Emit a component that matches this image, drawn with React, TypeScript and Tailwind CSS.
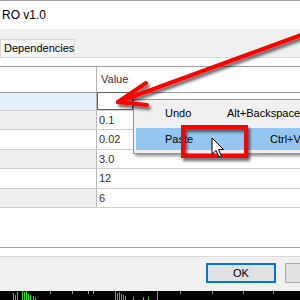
const ROWS = [
  { value: '', h: 'h-[18px]', left: 'bg-[#e3eefa]', edit: true },
  { value: '0.1', h: 'h-[19px]', left: 'bg-[#efefef]' },
  { value: '0.02', h: 'h-[20px]', left: 'bg-white' },
  { value: '3.0', h: 'h-[19px]', left: 'bg-[#efefef]' },
  { value: '12', h: 'h-[20px]', left: 'bg-white' },
  { value: '6', h: 'h-[19px]', left: 'bg-[#efefef]' },
]

// green volume bars along the bottom strip: [x, height]
const BARS: [number, number][] = [
  [13, 7], [15, 5], [17, 8], [22, 9], [24, 8], [26, 9], [28, 6], [30, 5], [33, 4], [35, 3],
  [115, 9], [117, 7], [119, 8], [121, 6], [123, 5], [125, 4], [133, 3], [143, 3], [148, 3], [157, 9],
]
const TICKS = [50, 72, 88, 93, 180, 212, 243, 273]

function Overlay() {
  return (
    <svg className="absolute left-0 top-0 pointer-events-none" width={300} height={300}>
      <defs>
        <filter id="sh" x="-20%" y="-20%" width="140%" height="160%">
          <feDropShadow dx="2" dy="3" stdDeviation="1.8" floodColor="#000" floodOpacity="0.6" />
        </filter>
      </defs>
      <g filter="url(#sh)" stroke="#ff0000" strokeWidth={4} strokeLinecap="round" fill="none">
        <line x1={304} y1={34} x2={118} y2={102} />
        <line x1={118} y1={102} x2={146} y2={83} />
        <line x1={118} y1={102} x2={147} y2={105} />
        <rect x={183} y={127} width={63} height={29} strokeLinecap="butt" />
      </g>
      <path
        d="M212 138 L212 154 L216 150.5 L219 157 L221.5 156 L218.5 149.5 L223.5 149.5 Z"
        fill="#fff"
        stroke="#000"
        strokeWidth={1}
        strokeLinejoin="round"
      />
    </svg>
  )
}

export default function App() {
  return (
    <div className="relative w-[300px] h-[300px] overflow-hidden flex flex-col bg-[#f0f0f0] text-[#222] font-['Liberation_Sans',Arial,sans-serif]">
      {/* title bar */}
      <div className="h-[29px] shrink-0 bg-white border-t border-[#a0a0a0] flex items-center pl-[2px] text-[12px] text-black">
        RO v1.0
      </div>

      {/* tab strip */}
      <div className="h-[28px] shrink-0 flex items-end">
        <div className="h-[18px] w-[75px] border border-b-0 border-[#d9d9d9] bg-[#f5f5f5] flex items-center pl-[3px] text-[11px] text-black">
          Dependencies
        </div>
      </div>

      {/* tab page */}
      <div className="h-[200px] shrink-0 bg-white border-y border-[#d9d9d9] pt-[8px]">
        <div className="h-[182px] border-y border-[#a0a0a0] flex flex-col text-[11px] text-[#333]">
          <div className="h-[26px] shrink-0 flex border-b border-[#a0a0a0]">
            <div className="w-[97px] border-r border-[#b9b9b9]" />
            <div className="flex items-center pl-[4px] text-[11px]">Value</div>
          </div>
          {ROWS.map((r, i) => (
            <div key={i} className={`${r.h} shrink-0 flex border-b border-[#cfcfcf]`}>
              <div className={`w-[97px] border-r border-[#b9b9b9] ${r.left}`} />
              <div className="flex-1 flex items-center pl-[2px]">
                {r.edit ? (
                  <div className="-mt-[2px] ml-[-2px] w-[36px] h-[18px] border border-[#646464] bg-white" />
                ) : (
                  r.value
                )}
              </div>
            </div>
          ))}
        </div>
      </div>

      {/* buttons */}
      <div className="h-[34px] shrink-0 flex pl-[206px] pt-[6px] gap-[9px] text-[11px] text-black">
        <div className="w-[70px] h-[20px] shrink-0 border border-[#0078d7] bg-[#e1e1e1] flex items-center justify-center shadow-[inset_0_0_0_1px_#0078d7]">
          OK
        </div>
        <div className="w-[70px] h-[20px] shrink-0 border border-[#adadad] bg-[#e1e1e1]" />
      </div>

      {/* chart strip */}
      <div className="h-[9px] shrink-0 bg-black">
        <svg width={300} height={9} className="block">
          {TICKS.map((x) => (
            <line key={x} x1={x + 0.5} y1={0} x2={x + 0.5} y2={3} stroke="#9a9a9a" />
          ))}
          {BARS.map(([x, h], i) => (
            <line key={i} x1={x + 0.5} y1={9 - h} x2={x + 0.5} y2={9} stroke="#2fd02f" />
          ))}
        </svg>
      </div>

      {/* context menu */}
      <div className="absolute left-[133px] top-[99px] w-[175px] h-[55px] bg-[#f0f0f0] border border-[#979797] shadow-[2px_2px_3px_rgba(0,0,0,0.45)] flex flex-col pt-[3px] px-[2px] text-[11px] text-black">
        <div className="h-[20px] flex items-center pl-[29px]">
          <span className="w-[62px]">Undo</span>
          <span className="whitespace-nowrap">Alt+Backspace</span>
        </div>
        <div className="h-[22px] mt-[5px] flex items-center pl-[29px] bg-[#94c6f0]">
          <span className="w-[105px]">Paste</span>
          <span className="whitespace-nowrap">Ctrl+V</span>
        </div>
      </div>

      <Overlay />
    </div>
  )
}
